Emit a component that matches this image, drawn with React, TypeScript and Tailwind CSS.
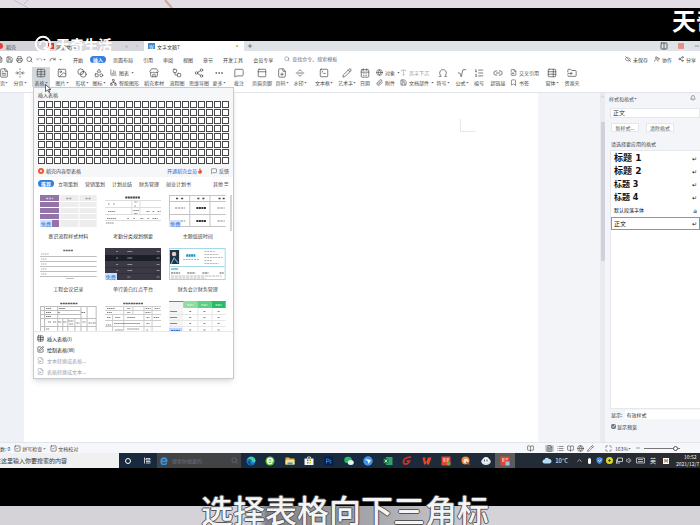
import type { ReactNode } from "react";
import clsx from "clsx";
import {
  Bell,
  Blend,
  Bookmark,
  BookOpen,
  CalendarDays,
  ChartColumn,
  ChevronUp,
  CloudOff,
  Columns2,
  Ellipsis,
  FilePlus,
  FileSymlink,
  FileText,
  Flame,
  FoldHorizontal,
  FolderInput,
  Globe,
  Image,
  Link2,
  List,
  ListOrdered,
  Maximize,
  MessageSquare,
  Minus,
  Network,
  Omega,
  PanelTop,
  Paperclip,
  Pencil,
  Plus,
  Printer,
  Radical,
  Redo,
  Save,
  Search,
  SeparatorHorizontal,
  Share2,
  Shapes,
  SquareCheck,
  SquarePen,
  SquareTerminal,
  Store,
  Table,
  TableProperties,
  Type,
  Undo,
  UserPlus,
  Volume1,
  Workflow,
  type LucideIcon,
} from "lucide-react";

interface Tool {
  label: string;
  icon: LucideIcon;
  width: string;
  caret?: boolean;
  active?: boolean;
}

interface ToolStack {
  width: string;
  rows: { label: string; icon: LucideIcon; caret?: boolean; muted?: boolean }[];
}

const MENUS = ["开始", "插入", "页面布局", "引用", "审阅", "视图", "章节", "开发工具", "会员专享"];

const RIBBON: (Tool | ToolStack)[] = [
  { label: "页", icon: FileText, width: "w-2", caret: true },
  { label: "分页", icon: FoldHorizontal, width: "w-6", caret: true },
  { label: "表格", icon: Table, width: "w-[18px]", caret: true, active: true },
  { label: "图片", icon: Image, width: "w-6", caret: true },
  { label: "形状", icon: Blend, width: "w-4", caret: true },
  { label: "图标", icon: Shapes, width: "w-[18px]", caret: true },
  {
    width: "w-[34px]",
    rows: [
      { label: "图表", icon: ChartColumn, caret: true },
      { label: "智能图形", icon: Network },
    ],
  },
  { label: "稻壳素材", icon: Store, width: "w-6" },
  { label: "流程图", icon: Workflow, width: "w-[22px]" },
  { label: "思维导图", icon: Share2, width: "w-[22px]" },
  { label: "更多", icon: Ellipsis, width: "w-[18px]", caret: true },
  { label: "批注", icon: MessageSquare, width: "w-[22px]" },
  { label: "页眉页脚", icon: PanelTop, width: "w-6" },
  { label: "页码", icon: FilePlus, width: "w-4", caret: true },
  { label: "水印", icon: SeparatorHorizontal, width: "w-5", caret: true },
  { label: "文本框", icon: SquareTerminal, width: "w-7", caret: true },
  { label: "艺术字", icon: Pencil, width: "w-[18px]", caret: true },
  { label: "日期", icon: CalendarDays, width: "w-[18px]" },
  {
    width: "w-6",
    rows: [
      { label: "对象", icon: Globe, caret: true },
      { label: "附件", icon: Paperclip },
    ],
  },
  {
    width: "w-[34px]",
    rows: [
      { label: "首字下沉", icon: Type, muted: true },
      { label: "文档部件", icon: Save, caret: true },
    ],
  },
  { label: "符号", icon: Omega, width: "w-[22px]", caret: true },
  { label: "公式", icon: Radical, width: "w-4", caret: true },
  { label: "编号", icon: ListOrdered, width: "w-[18px]" },
  { label: "超链接", icon: Link2, width: "w-5" },
  {
    width: "w-8",
    rows: [
      { label: "交叉引用", icon: FileSymlink },
      { label: "书签", icon: Bookmark },
    ],
  },
  { label: "窗体", icon: TableProperties, width: "w-6", caret: true },
  { label: "资源夹", icon: FolderInput, width: "w-4" },
];

const CATEGORIES = ["推荐", "立项策划", "营销策划", "计划总结", "财务管理", "创业计划书"];

const STYLES = [
  { name: "标题 1", className: "text-[9px] font-bold" },
  { name: "标题 2", className: "text-[9px] font-bold" },
  { name: "标题 3", className: "text-[8px] font-bold" },
  { name: "标题 4", className: "text-[8px] font-bold" },
  { name: "默认段落字体", className: "text-[5px]", mark: "a" },
  { name: "正文", className: "text-[6px]", selected: true },
];

function Caret() {
  return (
    <svg width="3" height="3" viewBox="0 0 6 6" className="shrink-0 fill-gray-500">
      <path d="M0.5 2h5L3 5z" />
    </svg>
  );
}

function RibbonTool({ tool }: { tool: Tool }) {
  const Icon = tool.icon;
  return (
    <button
      className={clsx(
        "flex h-5 shrink-0 flex-col items-center gap-px pt-px text-[#4a4a4a]",
        tool.width,
        tool.active && "bg-[#d3d8de]",
      )}
    >
      <Icon size={10} strokeWidth={1.7} className="shrink-0" />
      <span className="flex items-center whitespace-nowrap">
        {tool.label}
        {tool.caret && <Caret />}
      </span>
    </button>
  );
}

function RibbonStack({ stack }: { stack: ToolStack }) {
  return (
    <div className={clsx("flex shrink-0 flex-col gap-[2px] pt-px pl-[2px]", stack.width)}>
      {stack.rows.map(({ label, icon: Icon, caret, muted }) => (
        <button
          key={label}
          className={clsx("flex h-2 items-center gap-[2px] whitespace-nowrap", muted ? "text-gray-400" : "text-[#4a4a4a]")}
        >
          <Icon size={7} strokeWidth={2} className="shrink-0" />
          {label}
          {caret && <Caret />}
        </button>
      ))}
    </div>
  );
}

function TitleTabs() {
  return (
    <div className="flex h-[10px] shrink-0 items-stretch bg-[#dfe2e6] text-[#444]">
      <button className="flex w-[47px] items-center gap-[3px] bg-[#d3d5da]">
        <span className="-ml-[3px] size-[6px] rounded-full bg-[#e2413b]" />
        稻壳
      </button>
      <button className="flex w-[97px] items-center gap-[2px] bg-[#d6d8dc] pl-px">
        <span className="flex size-[6px] items-center justify-center bg-[#d9372c] font-bold text-white">P</span>
        演示文稿1
        <span className="ml-auto size-[3px] rounded-full bg-[#bfc2c7]" />
        <span className="mr-[6px] ml-[6px] size-[2px] rounded-full bg-[#bfc2c7]" />
      </button>
      <button className="flex w-[100px] items-center gap-[2px] bg-white pl-1 text-[#333]">
        <span className="flex h-[6px] w-[7px] items-center justify-center bg-[#3f86cf] text-white">W</span>
        文字文稿7
        <span className="mr-[6px] ml-auto size-[2px] rounded-full bg-[#9bbf3b]" />
      </button>
      <button className="flex w-3 items-center justify-center">
        <Plus size={6} strokeWidth={2.5} />
      </button>
      <div className="ml-auto flex items-center gap-[10px]">
        <Columns2 size={8} strokeWidth={2.4} />
        <span className="size-[6px] rounded-[1px] bg-[#e58f8b]" />
        <Minus size={6} strokeWidth={2} />
      </div>
    </div>
  );
}

function MenuBar() {
  return (
    <div className="flex h-[16px] shrink-0 items-center bg-white text-[#3c3c3c]">
      <div className="flex w-[68px] items-center gap-[3px] overflow-hidden">
        <button className="-ml-1"><FileText size={7} /></button>
        <button><Save size={7} /></button>
        <button><Printer size={7} /></button>
        <button><Search size={7} /></button>
        <button className="flex items-center text-gray-400"><Undo size={7} /><Caret /></button>
        <button><Redo size={7} /></button>
        <Caret />
      </div>
      <nav className="flex items-center gap-1 pl-[2px]">
        {MENUS.map((menu) => (
          <button
            key={menu}
            className={clsx(
              "h-[7px] rounded-full px-[3px] whitespace-nowrap",
              menu === "插入" && "bg-[#2f80e0] font-bold text-white",
            )}
          >
            {menu}
          </button>
        ))}
      </nav>
      <label className="ml-2 flex items-center gap-[2px] text-gray-500">
        <Search size={6} />
        <input placeholder="查找命令、搜索模板" className="w-[50px] leading-[6px] placeholder:text-gray-500" />
      </label>
      <div className="ml-auto flex items-center gap-[6px] pr-1 whitespace-nowrap">
        <button className="flex items-center gap-[2px]"><CloudOff size={6} />未保存</button>
        <button className="flex items-center gap-[2px]"><UserPlus size={6} />协作</button>
        <button className="flex items-center gap-[2px]"><Share2 size={6} />分享</button>
      </div>
    </div>
  );
}

function FreeBadge() {
  return (
    <span className="absolute bottom-0 left-0 bg-[#cfe1fb] px-px text-[#2b6fd6]">免费</span>
  );
}

function PurpleTable() {
  return (
    <svg viewBox="0 0 56 32" className="h-8 w-full" preserveAspectRatio="none">
      <rect width="56" height="32" fill="#ededed" />
      <rect width="19" height="32" fill="#9474a8" />
      <path d="M0 6.500H56M0 12.500H56M0 18.500H56M0 24.500H56M19.500 0V32M38.500 0V32" stroke="#fff" />
      <path d="M6 3.500h7" stroke="#d9cbe3" strokeWidth="1.500" strokeDasharray="2 1" />
      <path d="M26 3.500h6M45 3.500h5" stroke="#999" strokeWidth="1.500" strokeDasharray="2 1" />
    </svg>
  );
}

function ApprovalForm() {
  return (
    <svg viewBox="0 0 56 32" className="h-8 w-full" preserveAspectRatio="none">
      <path d="M20 2.500h15" stroke="#444" strokeWidth="2" strokeDasharray="2 .5" />
      <path d="M0 5.500H56M0 12.500H56M0 19.500H56M0 25.500H56M26.500 5V20M34.500 5V20" stroke="#ddd" />
      <path d="M3 9h2M8 9h2M29 7h3M29 11h2M3 16.500h7M28 15.500h6M29 18.500h3M41 16.500h3M47 16.500h2M52 16.500h3M2 23.500h9M22 23.500h2M28 23.500h2M35 23.500h3M42 23.500h2M47 23.500h5M1 28h8" stroke="#888" strokeDasharray="1.500 .5" />
    </svg>
  );
}

function DutyTable() {
  return (
    <svg viewBox="0 0 56 32" className="h-8 w-full" preserveAspectRatio="none">
      <path d="M0 .5H56M0 6.500H56M0 19.500H56M0 31.500H56M.5 0V32M20.500 0V32M40.500 0V32" stroke="#c4c4c4" />
      <path d="M7 3.500h2M12 3.500h2M28 3.500h2M33 3.500h2M49 3.500h2M53 3.500h2" stroke="#444" strokeWidth="1.500" />
      <path d="M6 13h10M48 13h7M6 26h10M48 26h7" stroke="#777" strokeDasharray="2 1" />
      <path d="M27 13h10M27 26h10" stroke="#333" strokeWidth="2" strokeDasharray="2 .5" />
    </svg>
  );
}

function MeetingNotes() {
  return (
    <svg viewBox="0 0 56 32" className="h-8 w-full" preserveAspectRatio="none">
      <path d="M23 2.500h10" stroke="#666" strokeWidth="1.500" strokeDasharray="2 .5" />
      <path d="M0 8.500H56M0 13.500H56M0 18.500H56M0 23.500H56M0 28.500H56" stroke="#bdbdbd" />
      <path d="M1 6h8M1 11h6M1 16h6M1 21h6M1 26h6M26 30.500h8" stroke="#aaa" strokeDasharray="1.500 .5" />
    </svg>
  );
}

function DarkTable() {
  return (
    <svg viewBox="0 0 56 32" className="h-8 w-full" preserveAspectRatio="none">
      <rect width="56" height="32" fill="#3b3944" />
      <rect y="7" width="56" height="6" fill="#1c1e28" />
      <path d="M0 19.500H56M0 25.500H56" stroke="#302f39" />
      <path d="M11 3.500h2M22 3.500h5M51 3.500h3M11 10h2M22 10h5M51 10h3M11 16.500h2M22 16.500h5M51 16.500h3M11 22.500h2M22 22.500h5M51 22.500h3M22 29h3M51 29h3" stroke="#8d8b98" />
    </svg>
  );
}

function ResumeCard() {
  return (
    <svg viewBox="0 0 56 32" className="h-8 w-full" preserveAspectRatio="none">
      <rect x=".5" y=".5" width="55" height="31" fill="#fff" stroke="#a7d8ea" />
      <rect x="1" y="2" width="9" height="14" fill="#1f3346" />
      <circle cx="5" cy="6" r="2.200" fill="#e5cdbd" />
      <path d="M2 16l3-6 4 5" stroke="#8fb3cc" fill="none" />
      <path d="M17 7.500h9" stroke="#1497c4" strokeWidth="2.500" strokeDasharray="2 .4" />
      <path d="M14 11.500h16M35 3.500h10M35 6.500h14M35 9.500h18M35 12.500h8M35 15.500h14" stroke="#b5b5b5" strokeDasharray="2 .7" />
      <path d="M1 18.500H55" stroke="#a7d8ea" />
      <path d="M2 21h7" stroke="#1497c4" />
      <path d="M2 25h9M18 25h8M33 25h6M50 25h4" stroke="#555" strokeDasharray="2 .5" />
      <path d="M2 28h50M2 30h34" stroke="#bbb" strokeDasharray="3 .7" />
    </svg>
  );
}

function ProjectForm() {
  return (
    <svg viewBox="0 0 56 32" className="h-8 w-full" preserveAspectRatio="none">
      <path d="M20 2.500h17" stroke="#555" strokeWidth="1.500" strokeDasharray="2 .5" />
      <path d="M0 5.500H56M0 9.500H40M0 13.500H40M0 17.500H56M0 25.500H56M.5 5V32M4.500 5V32M17.500 5V32M22.500 17V32M27.500 17V32M40.500 5V32M34.500 17V32M46.500 5V32M55.500 5V32" stroke="#bdbdbd" />
      <path d="M6 7.500h5M19 7.500h6M6 11.500h5M18 11.500h2M41 11.500h4M6 15.500h5M8 21h3M13 21h3M18 21h3M23 21h3M28 20h5M29 23h4M36 22h3M42 21h3M48 22h3M52 22h3M6 28h3" stroke="#777" strokeDasharray="1.500 .5" />
    </svg>
  );
}

function RecordForm() {
  return (
    <svg viewBox="0 0 56 32" className="h-8 w-full" preserveAspectRatio="none">
      <path d="M18 2.500h20" stroke="#555" strokeWidth="1.500" strokeDasharray="2 .5" />
      <path d="M0 5.500H56M0 9.500H56M0 13.500H56M0 19.500H56M0 25.500H56M7.500 14V32M18.500 5V32M27.500 5V14M38.500 5V32M46.500 5V32" stroke="#ccc" />
      <path d="M2 7.500h8M22 7.500h3M40 7.500h5M49 7.500h5M2 11.500h5M22 11.500h3M40 11.500h5M2 16.500h4M10 16.500h5M22 16.500h8M41 16.500h3M48 16.500h6M9 22.500h26M10 29h8M22 28h12M41 22.500h3M1 24h5M41 29h2" stroke="#888" strokeDasharray="1.500 .5" />
    </svg>
  );
}

function GreenTable() {
  return (
    <svg viewBox="0 0 56 32" className="h-8 w-full" preserveAspectRatio="none">
      <rect width="14" height="32" fill="#f4f4f4" />
      <rect width="56" height="1" fill="#27b368" />
      <rect x="14" width="14" height="7" fill="#8fdc9c" />
      <rect x="28" width="14" height="7" fill="#5ccf83" />
      <rect x="42" width="14" height="7" fill="#27bd68" />
      <path d="M18 4h6M32 4h6M46 4h6" stroke="#eafff0" strokeDasharray="2 .5" />
      <path d="M0 13.500H56M0 19.500H56M0 25.500H56M28.500 7V32M42.500 7V32" stroke="#e6e6e6" />
      <path d="M1 10.500h7M1 16.500h7M1 22.500h7M20 10.500h2M34 10.500h2M48 10.500h2M20 16.500h2M34 16.500h2M48 16.500h2M20 22.500h2M34 22.500h2M48 22.500h2M20 29h2M34 29h2M48 29h2" stroke="#888" />
      <rect y="27" width="13" height="5" fill="#bcd5fa" />
      <path d="M2 29.500h9" stroke="#2b6fd6" strokeDasharray="2 .5" />
    </svg>
  );
}

const TEMPLATES: { title?: string; preview: ReactNode; free?: boolean }[] = [
  { title: "意识流程样式材料", preview: <PurpleTable />, free: true },
  { title: "考勤分类规划纲要", preview: <ApprovalForm /> },
  { title: "主题值班时间", preview: <DutyTable />, free: true },
  { title: "工程会议记录", preview: <MeetingNotes /> },
  { title: "单行黄白红点平台", preview: <DarkTable />, free: true },
  { title: "财务会计财务管理", preview: <ResumeCard /> },
  { preview: <ProjectForm /> },
  { preview: <RecordForm /> },
  { preview: <GreenTable /> },
];

const ACTIONS = [
  { label: "插入表格(I)", icon: Table },
  { label: "绘制表格(W)", icon: SquarePen },
  { label: "文本转换成表格...", icon: FileSymlink, disabled: true },
  { label: "表格转换成文本...", icon: FileSymlink, disabled: true },
];

function TableMenu() {
  return (
    <div className="absolute top-[-6px] left-[33px] z-10 w-[201px] border border-[#c6c9ce] bg-white text-[#444] shadow-md">
      <div className="bg-[#f5f7f9] px-1 pt-[3px] pb-[2px]">
        <div className="h-[10px]">插入表格</div>
        <div className="grid w-fit grid-cols-[repeat(24,7px)] gap-px">
          {Array.from({ length: 192 }, (_, i) => (
            <button key={i} className="h-[7px] border border-[#484848] bg-white" />
          ))}
        </div>
        <div className="mt-[2px] flex h-[9px] items-center">
          <span className="flex size-[6px] items-center justify-center rounded-full bg-[#ea5b34]">
            <span className="size-[2px] rounded-full bg-white" />
          </span>
          <span className="pl-[2px]">稻壳内容型表格</span>
          <a href="#" className="ml-auto text-[#2272d8]">开通稻壳会员</a>
          <Flame size={6} className="fill-[#e4502f] text-[#e4502f]" />
          <button className="ml-2 flex items-center gap-[2px]"><MessageSquare size={6} />反馈</button>
        </div>
      </div>
      <div className="flex items-center gap-px pt-[3px] pr-[5px] pl-1 whitespace-nowrap">
        {CATEGORIES.map((category, i) => (
          <button
            key={category}
            className={clsx("h-[7px] rounded-full px-[3px]", i === 0 && "bg-[#2f80e0] font-bold text-white")}
          >
            {category}
          </button>
        ))}
        <button className="ml-auto">其他 ☰</button>
      </div>
      <div className="flex h-[145px] overflow-hidden border-b border-gray-200 pt-2 pl-[6px]">
        <div className="grid flex-1 auto-rows-[53px] grid-cols-3 gap-x-2">
          {TEMPLATES.map(({ title, preview, free }, i) => (
            <button key={i} className="flex flex-col gap-[5px]">
              <span className="relative block w-full">
                {preview}
                {free && <FreeBadge />}
              </span>
              <span className="w-full text-center whitespace-nowrap">{title}</span>
            </button>
          ))}
        </div>
        <div className="ml-1 w-[3px]">
          <div className="h-9 w-[2px] bg-[#d3d5d9]" />
        </div>
      </div>
      <div className="flex flex-col pt-px pb-px">
        {ACTIONS.map(({ label, icon: Icon, disabled }) => (
          <button
            key={label}
            disabled={disabled}
            className="flex h-[11px] items-center gap-[3px] pl-[3px] text-[#222] disabled:text-gray-400"
          >
            <Icon size={7} strokeWidth={2} />
            {label}
          </button>
        ))}
      </div>
    </div>
  );
}

function StylePanel() {
  return (
    <aside className="flex w-[95px] shrink-0 flex-col bg-[#f3f5f9] pl-1 text-[#555]">
      <div className="flex h-[10px] items-center pr-1">
        样式和格式
        <Caret />
        <Bell size={6} className="ml-auto" />
      </div>
      <select className="mt-[5px] ml-px h-[10px] appearance-none border border-gray-200 bg-white pl-[2px] text-[6px] leading-[8px] text-[#333]">
        <option>正文</option>
      </select>
      <div className="mt-[5px] ml-[2px] flex gap-[7px]">
        <button className="h-[9px] w-7 border border-gray-200 bg-white">新样式...</button>
        <button className="h-[9px] w-7 border border-gray-200 bg-white">清除格式</button>
      </div>
      <label className="mt-2 ml-[2px] text-[#444]">请选择要应用的格式</label>
      <div className="mt-[3px] ml-px flex flex-1 flex-col border border-gray-200 border-r-0 bg-white pt-px">
        {STYLES.map(({ name, className, mark, selected }) => (
          <button
            key={name}
            className={clsx(
              "flex h-[13px] shrink-0 items-center justify-between border pr-[2px] pl-[2px] font-['DejaVu_Sans','Noto_Sans_CJK_SC',sans-serif] leading-[11px] text-[#111]",
              selected ? "border-[#7f9f9f]" : "border-transparent",
              className,
            )}
          >
            <span className="whitespace-pre">{name}</span>
            <span className="text-[6px] font-normal">{mark ?? "↵"}</span>
          </button>
        ))}
      </div>
      <label className="mt-px flex items-center gap-[3px] pl-[2px] text-[#333]">
        显示:
        <select className="h-[9px] flex-1 appearance-none bg-white pl-px leading-[7px]">
          <option>有效样式</option>
        </select>
      </label>
      <label className="mt-1 mb-3 flex items-center gap-px pl-[2px] text-[#333]">
        <input type="checkbox" defaultChecked className="size-[5px] accent-gray-500" />
        显示预览
      </label>
    </aside>
  );
}

function Workspace() {
  return (
    <main className="relative flex min-h-0 flex-1 bg-[#eef1f6]">
      <TableMenu />
      <div className="ml-6 flex flex-1 bg-white">
        <div className="mt-[26px] mr-[62px] ml-auto h-[13px] w-4 border-b border-l border-gray-200" />
      </div>
      <div className="w-[62px] bg-[#f2f4f8]" />
      <div className="flex w-[5px] flex-col items-center bg-[#e9ebf1] text-gray-400">
        <ChevronUp size={5} className="mt-px" />
        <div className="mt-[23px] h-[139px] w-1 bg-[#cfd2da]" />
      </div>
      <StylePanel />
    </main>
  );
}

function StatusBar() {
  return (
    <div className="flex h-[11px] shrink-0 items-center border-t border-[#e2e5ea] bg-[#f6f7fa] text-[#444]">
      <span>数: 0</span>
      <button className="ml-1 flex items-center gap-px"><SquareCheck size={7} />拼写检查<Caret /></button>
      <button className="ml-1 flex items-center gap-px"><SquareCheck size={7} />文档校对</button>
      <div className="ml-auto flex items-center gap-[3px]">
        <BookOpen size={7} className="mr-2" />
        <button className="bg-[#cdd3dc] px-px"><FileText size={7} /></button>
        <button><List size={7} /></button>
        <button><BookOpen size={7} /></button>
        <button><Globe size={7} /></button>
        <button><Pencil size={7} /></button>
        <button className="ml-2"><Maximize size={7} /></button>
        <button className="flex items-center">163%<Caret /></button>
        <button className="ml-px"><Minus size={6} /></button>
        <input
          type="range"
          defaultValue={92}
          className="mr-5 h-[5px] w-9 appearance-none bg-[linear-gradient(#777,#777)] bg-[length:100%_1px] bg-center bg-no-repeat [&::-webkit-slider-thumb]:size-[5px] [&::-webkit-slider-thumb]:appearance-none [&::-webkit-slider-thumb]:rounded-full [&::-webkit-slider-thumb]:border [&::-webkit-slider-thumb]:border-gray-600 [&::-webkit-slider-thumb]:bg-white"
        />
      </div>
    </div>
  );
}

const APPS: ReactNode[] = [
  <>
    <circle cx="10" cy="10" r="9" fill="#1879c9" />
    <path d="M2 7C6-1 18 0 19 9c0 4-5 5-7 3 1-6-6-8-10-5z" fill="#45cfa0" />
    <path d="M9 10c-2 4 1 8 6 7-5 4-11 0-11-5 0-3 4-4 5-2z" fill="#0c4c9c" />
  </>,
  <>
    <circle cx="10" cy="10" r="9" fill="#62c33b" />
    <path d="M5 10h10c0-7-10-7-10 0s8 6 9 3" fill="none" stroke="#fff" strokeWidth="2.500" />
  </>,
  <>
    <path d="M1 3h7l2 2h9v12H1z" fill="#e7b73b" />
    <path d="M1 8h18v9H1z" fill="#fbe08a" />
    <path d="M5 13h10v4H5z" fill="#3e8fd8" />
  </>,
  <>
    <path d="M7 5V2h6v3" fill="none" stroke="#fff" strokeWidth="1.500" />
    <path d="M1 5h18v13H1z" fill="#f4f4f4" />
    <path d="M6 7h3v3H6z" fill="#e5502e" />
    <path d="M11 7h3v3h-3z" fill="#76b82a" />
    <path d="M6 12h3v3H6z" fill="#2a94dc" />
    <path d="M11 12h3v3h-3z" fill="#f4b71d" />
  </>,
  <>
    <rect x="1" y="1" width="18" height="18" rx="2" fill="#0a1c4d" />
    <path d="M5 15V6h3a2.500 2.500 0 0 1 0 5H5M15 9c-5-1-4 2-2 2.500S15 15 11 14" fill="none" stroke="#3c9bf0" strokeWidth="1.500" />
  </>,
  <>
    <ellipse cx="8" cy="8" rx="7.500" ry="6.500" fill="#29b866" />
    <ellipse cx="13.500" cy="13" rx="6" ry="5" fill="#e9f7ee" />
  </>,
  <>
    <circle cx="10" cy="10" r="9.500" fill="#3f95ee" />
    <path d="M4 6l12 2-5 8-1-5z" fill="#fff" />
  </>,
  <>
    <path d="M6 2h13v16H6z" fill="#2fa46c" />
    <path d="M1 5h10v10H1z" fill="#107040" />
    <path d="M3.500 7l5 6M8.500 7l-5 6" stroke="#fff" strokeWidth="1.500" />
  </>,
  <path d="M18 2C8 2 3 7 3 12s8 7 12-2H9" fill="none" stroke="#d8301f" strokeWidth="3.500" />,
  <path d="M1 3h7l-2 3 2 7 4-10h7l-5 14h-4l-1-4-2 4H4z" fill="#e8472c" />,
  <>
    <rect x="1" y="1" width="18" height="18" fill="#e5452b" />
    <path d="M4 6h5M4 10h5M11 6h5M11 10h4" stroke="#fff" strokeWidth="1.800" />
    <circle cx="15" cy="15" r="4" fill="#56b04c" />
  </>,
  <>
    <circle cx="9" cy="9" r="8" fill="#e98b3d" />
    <circle cx="10" cy="10" r="5" fill="#f6e4d3" />
    <path d="M10 12l7 5" stroke="#b8562c" strokeWidth="3" />
  </>,
  <>
    <ellipse cx="10" cy="11" rx="9.500" ry="7" fill="#dde3ea" />
    <circle cx="10" cy="8" r="6" fill="#f5f7fa" />
    <path d="M7 7v4M12 7v4" stroke="#46525e" strokeWidth="2" />
  </>,
  <>
    <rect x="1" y="1" width="18" height="18" fill="#e5452b" />
    <path d="M4 6h5M4 10h5M11 6h5" stroke="#fff" strokeWidth="1.800" />
    <rect x="11" y="11" width="8" height="8" fill="#8ec4f3" />
  </>,
];

function Taskbar() {
  return (
    <div className="flex h-[15px] shrink-0 items-stretch bg-linear-to-r from-[#182a3e] from-50% to-[#2b2c2e] text-gray-100">
      <input
        placeholder="在这里输入你要搜索的内容"
        className="w-[119px] bg-[#f0f0f0] indent-[-5px] text-[6px] placeholder:text-[#333]"
      />
      <div className="flex w-[38px] items-center justify-around">
        <span className="size-[6px] rounded-full border border-white" />
        <svg width="7" height="7" viewBox="0 0 14 14" fill="none" stroke="#fff" strokeWidth="1.500">
          <path d="M1 1v12M4 3h8v3H4zM4 9h9M4 12h9" />
        </svg>
      </div>
      <label className="flex w-[84px] items-center gap-1 bg-[#424344] px-[3px]">
        <svg width="8" height="8" viewBox="0 0 20 20" fill="none" stroke="#3494e8" strokeWidth="4">
          <path d="M4 11h13c0-11-14-11-14 0s11 9 13 4" />
        </svg>
        <input placeholder="搜索你想要的" className="w-0 flex-1 placeholder:text-gray-500" />
        <Search size={7} className="text-gray-500" />
      </label>
      <div className="grid w-[274px] grid-cols-14">
        {APPS.map((art, i) => (
          <button
            key={i}
            className={clsx("flex items-center justify-center", i === APPS.length - 1 && "bg-[#5b5c5e]")}
          >
            <svg width="10" height="10" viewBox="0 0 20 20">{art}</svg>
          </button>
        ))}
      </div>
      <div className="ml-auto flex items-center gap-[3px]">
        <svg width="10" height="7" viewBox="0 0 20 14">
          <path d="M5 13a4 4 0 0 1 0-8 5 5 0 0 1 9-1 4.500 4.500 0 0 1 1 9z" fill="#b9dcf5" />
        </svg>
        <span className="text-[6px]">10°C</span>
        <ChevronUp size={7} className="ml-[5px]" />
        <span className="mx-[2px] h-[6px] w-[3px] rounded-full bg-white" />
        <svg width="7" height="7" viewBox="0 0 14 14">
          <path d="M7 0l6 2v5c0 4-3 6-6 7-3-1-6-3-6-7V2z" fill="#3c8ff0" />
          <path d="M4 6l3 3 4-4" stroke="#fff" strokeWidth="1.500" fill="none" />
        </svg>
        <svg width="7" height="7" viewBox="0 0 14 14">
          <circle cx="7" cy="7" r="7" fill="#e6d818" />
          <path d="M4 7h6M7 4v6" stroke="#3b5d22" strokeWidth="2" />
        </svg>
        <svg width="7" height="7" viewBox="0 0 14 14" fill="none" stroke="#eee" strokeWidth="1.500">
          <path d="M3 2h10v7H3zM1 12h7M1 5v8" />
        </svg>
        <Volume1 size={7} />
        <svg width="9" height="7" viewBox="0 0 18 14" fill="none" stroke="#ddd" strokeWidth="1.500">
          <path d="M1 2h16v10H1zM4 5h10M4 9h10" />
        </svg>
        <span className="ml-[2px] text-[6px]">英</span>
        <span className="mx-1 flex size-[6px] items-center justify-center bg-white text-[#222]">M</span>
        <div className="flex w-[24px] flex-col gap-px text-[5px] leading-[6px] whitespace-nowrap">
          <span className="pl-2">10:52</span>
          <span>2021/12/7</span>
        </div>
      </div>
    </div>
  );
}

function ChannelLogo() {
  return (
    <div className="absolute top-[35px] left-[34px] z-20 flex items-center gap-1 text-white">
      <svg width="18" height="18" viewBox="0 0 36 36" fill="none" stroke="currentColor">
        <circle cx="18" cy="18" r="14.500" strokeWidth="4" />
        <path d="M12 20a7 7 0 1 1 7 6M19 26l13 4" strokeWidth="3" />
      </svg>
      <span className="text-[14px] leading-[18px] font-bold">天奇生活</span>
    </div>
  );
}

export default function App() {
  return (
    <div className="relative flex h-screen flex-col overflow-hidden bg-black font-['Noto_Sans_CJK_SC',sans-serif] text-[5px] leading-[7px]">
      <div className="h-2 shrink-0 overflow-hidden bg-[#e3dde5]">
        <svg width="200" height="8" viewBox="0 0 200 8" fill="none" stroke="#b9b0b8">
          <path d="M14 0l14 8M24 4l4-4" strokeWidth=".7" />
          <path d="M165 0l7 8" stroke="#cfa596" strokeWidth="2" />
        </svg>
      </div>
      <div className="h-[33px] shrink-0 overflow-hidden">
        <div className="ml-auto w-7 text-[24px] leading-[24px] font-bold whitespace-nowrap text-white">天奇</div>
      </div>
      <ChannelLogo />
      <TitleTabs />
      <MenuBar />
      <div className="flex h-[26px] shrink-0 overflow-hidden border-b border-[#e1e4e8] bg-white">
        {RIBBON.map((item, i) =>
          "rows" in item ? <RibbonStack key={i} stack={item} /> : <RibbonTool key={i} tool={item} />,
        )}
      </div>
      <Workspace />
      <StatusBar />
      <Taskbar />
      <footer className="relative h-[57px] shrink-0 pt-[38px]">
        <div className="h-full bg-linear-to-r from-[#d5d3d8] from-37% via-[#818185] via-38% to-[#d5d3d8] to-70%" />
        <p className="absolute inset-x-0 top-[25px] pr-[10px] text-center text-[32px] leading-[32px] font-medium text-[#f4f4f4] [text-shadow:1px_0_#555,-1px_0_#555,0_1px_#555,0_-1px_#555]">
          选择表格向下三角标
        </p>
      </footer>
      <svg width="7" height="9" viewBox="0 0 14 18" className="absolute top-[84px] left-[45px] z-20">
        <path d="M1 1v14l4-3 3 5 2-1-3-5h5z" fill="#fff" stroke="#333" strokeWidth="1.500" />
      </svg>
    </div>
  );
}
